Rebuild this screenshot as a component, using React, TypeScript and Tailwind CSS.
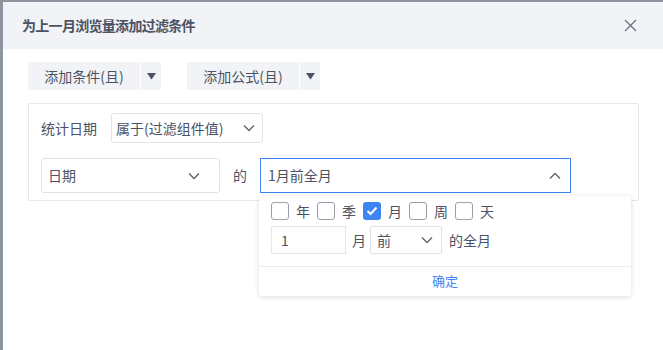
import React from "react";

const Chevron = ({ up = false }: { up?: boolean }) => (
  <svg width="14" height="14" viewBox="0 0 14 14" className="text-[#5b6270]">
    <path
      d={up ? "M2 9.5 L7 4.5 L12 9.5" : "M2 4.5 L7 9.5 L12 4.5"}
      fill="none"
      stroke="currentColor"
      strokeWidth="1.3"
    />
  </svg>
);

const Caret = () => (
  <svg width="9" height="7" viewBox="0 0 9 7">
    <path d="M0 0 H9 L4.5 6.5 Z" fill="#4b5363" />
  </svg>
);

const Check = ({ label, checked = false }: { label: string; checked?: boolean }) => (
  <div className="flex items-center">
    {checked ? (
      <div className="w-[18px] h-[18px] rounded-[3px] bg-[#3e84f2] flex items-center justify-center">
        <svg width="12" height="10" viewBox="0 0 12 10">
          <path d="M1.5 5 L4.5 8 L10.5 1.5" fill="none" stroke="white" strokeWidth="2" />
        </svg>
      </div>
    ) : (
      <div className="w-[18px] h-[18px] rounded-[3px] border border-[#9aa0aa] bg-white" />
    )}
    <span className="ml-[7px] mr-[7px]">{label}</span>
  </div>
);

const App = () => {
  return (
    <div className="w-[663px] h-[350px] overflow-hidden bg-[#8f959e] pl-[3px] pt-[2px] text-[14px] text-[#4b5363] font-['Noto_Sans_CJK_SC','Noto_Sans',sans-serif]">
      <div className="relative h-full bg-white">
        {/* header */}
        <div className="h-[47px] bg-[#f2f3f7] flex items-center justify-between pl-[19px] pr-[26px]">
          <span className="text-[14px] font-bold tracking-[-0.7px] text-[#4a5263]">为上一月浏览量添加过滤条件</span>
          <svg width="13" height="13" viewBox="0 0 13 13">
            <path d="M1 1 L12 12 M12 1 L1 12" stroke="#6b7280" strokeWidth="1.3" />
          </svg>
        </div>

        <div className="pl-[25px] pt-[13px]">
          {/* action buttons */}
          <div className="flex gap-[26px]">
            <div className="flex gap-[1px]">
              <div className="w-[112px] h-[28px] bg-[#f2f3f7] flex items-center justify-center">添加条件(且)</div>
              <div className="w-[20px] h-[28px] bg-[#f2f3f7] flex items-center justify-center">
                <Caret />
              </div>
            </div>
            <div className="flex gap-[1px]">
              <div className="w-[112px] h-[28px] bg-[#f2f3f7] flex items-center justify-center">添加公式(且)</div>
              <div className="w-[20px] h-[28px] bg-[#f2f3f7] flex items-center justify-center">
                <Caret />
              </div>
            </div>
          </div>

          {/* filter box */}
          <div className="mt-[13px] w-[611px] h-[98px] border border-[#e6e7eb] rounded-[2px] pl-[12px] pt-[9px]">
            <div className="flex items-center">
              <span className="w-[70px]">统计日期</span>
              <div className="w-[152px] h-[30px] border border-[#e1e3e8] rounded-[3px] flex items-center justify-between pl-[4px] pr-[6px]">
                <span>属于(过滤组件值)</span>
                <Chevron />
              </div>
            </div>
            <div className="flex items-center mt-[15px]">
              <div className="w-[179px] h-[35px] border border-[#e1e3e8] rounded-[3px] flex items-center justify-between pl-[6px] pr-[18px]">
                <span>日期</span>
                <Chevron />
              </div>
              <span className="ml-[13px] mr-[13px]">的</span>
              <div className="w-[311px] h-[35px] border border-[#3e84f2] flex items-center justify-between pl-[7px] pr-[8px]">
                <span>1月前全月</span>
                <Chevron up />
              </div>
            </div>
          </div>
        </div>

        {/* popup */}
        <div className="absolute left-[256px] top-[194px] w-[372px] h-[100px] bg-white rounded-[3px] shadow-[0_1px_5px_rgba(0,0,0,0.15)]">
          <div className="pl-[12px] pt-[6px]">
            <div className="flex items-center h-[18px]">
              <Check label="年" />
              <Check label="季" />
              <Check label="月" checked />
              <Check label="周" />
              <Check label="天" />
            </div>
            <div className="flex items-center mt-[6px]">
              <div className="w-[75px] h-[28px] border border-[#e6e7eb] flex items-center pl-[9px]">1</div>
              <span className="ml-[6px] mr-[4px]">月</span>
              <div className="w-[72px] h-[28px] border border-[#e1e3e8] rounded-[2px] flex items-center justify-between pl-[6px] pr-[7px]">
                <span>前</span>
                <Chevron />
              </div>
              <span className="ml-[7px]">的全月</span>
            </div>
          </div>
          <div className="mt-[12px] border-t border-[#ececf0] h-[29px] flex items-center justify-center text-[13px] text-[#3e84f2]">
            确定
          </div>
        </div>
      </div>
    </div>
  );
};

export default App;
